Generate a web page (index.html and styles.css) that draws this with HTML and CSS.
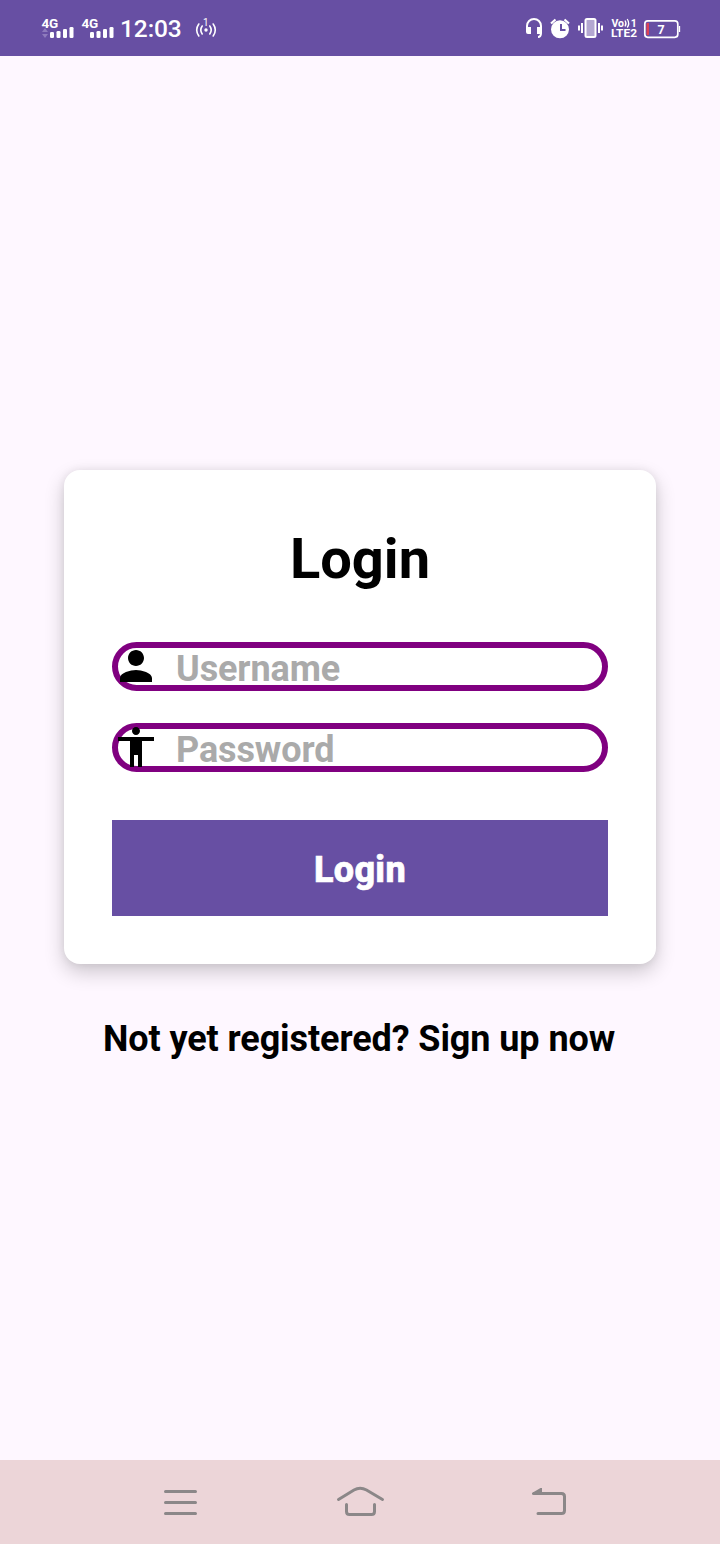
FILE: index.html
```html
<!DOCTYPE html>
<html lang="en">
<head>
<meta charset="utf-8">
<title>Login</title>
<link rel="stylesheet" href="styles.css">
</head>
<body>
<header class="status">
  <svg class="signal" width="80" height="56" viewBox="40 0 80 56" fill="#fff">
    <text class="net" x="41.500" y="28">4G</text>
    <text class="net" x="81.500" y="28">4G</text>
    <path fill="#8e7bbd" d="M42 32l3-4 3 4zM42 34h6l-3 4z"/>
    <g id="bars"><rect x="50" y="32" width="4" height="6" rx="1.3"/><rect x="56.500" y="31" width="4" height="7" rx="1.3"/><rect x="63" y="29" width="4" height="9" rx="1.3"/><rect x="69.500" y="27" width="4" height="11" rx="1.3"/></g>
    <use href="#bars" x="40"/>
  </svg>
  <span class="clock">12:03</span>
  <svg class="hotspot" width="24" height="56" viewBox="194 0 24 56" fill="none" stroke="#fff" stroke-width="1.600" stroke-linecap="round">
    <path d="M198.800 24Q194.600 30 198.800 36M202.200 26Q199.400 30 202.200 34M213.200 24Q217.400 30 213.200 36M209.800 26Q212.600 30 209.800 34"/>
    <circle cx="206" cy="30" r="1.700" fill="#fff" stroke="none"/>
    <text class="one" x="203" y="26">1</text>
  </svg>
  <svg class="indicators" width="160" height="56" viewBox="522 0 160 56" fill="none" stroke="#fff">
    <path stroke-width="2" d="M527 30v-4a7 7 0 0 1 14 0v7q0 4-3 4"/>
    <path fill="#fff" stroke="none" d="M526 27h5v7h-3q-2 0-2-2zM537 27h5v5q0 2-2 2h-3z"/>
    <circle cx="560" cy="29.300" r="9" fill="#fff" stroke="none"/>
    <path stroke-width="2.200" d="M551 23.500l4.500-4M569 23.500l-4.500-4"/>
    <path stroke="#674fa3" stroke-width="2" d="M561 24v6h4.500"/>
    <rect x="585.500" y="19" width="10" height="18" rx="1.500" fill="#b3a7d1" stroke-width="2"/>
    <path stroke-width="2" d="M582 23v10M599 23v10M579 25.500v5M602 25.500v5"/>
    <g fill="#fff" stroke="none">
      <text class="volte" x="611.500" y="27">Vo</text>
      <text class="volte" x="630.800" y="27">1</text>
      <text class="volte lte" x="611" y="37.300" textLength="26" lengthAdjust="spacingAndGlyphs">LTE2</text>
    </g>
    <path stroke-width="1.300" d="M625 20.500q2 3 0 6M627.200 19q3 4.500 0 8.500"/>
    <rect x="644.800" y="20.800" width="33" height="16.500" rx="3" stroke-width="1.700"/>
    <path fill="#dd4255" stroke="none" d="M647 23h2v12h-2q-.5 0-.5-1V24q0-1 .5-1z"/>
    <path stroke-width="1.300" d="M679.500 26v6"/>
    <text class="charge" x="657.500" y="34" fill="#fff" stroke="none">7</text>
  </svg>
</header>
<main class="screen">
  <section class="card">
    <h1 class="title">Login</h1>
    <div class="field">
      <svg class="icon" viewBox="0 0 24 24"><path d="M12 12c2.210 0 4-1.790 4-4s-1.790-4-4-4-4 1.790-4 4 1.790 4 4 4zm0 2c-2.670 0-8 1.340-8 4v2h16v-2c0-2.660-5.330-4-8-4z"/></svg>
      <span class="hint">Username</span>
    </div>
    <div class="field">
      <svg class="icon" viewBox="0 0 24 24"><path d="M12 2c1.100 0 2 .9 2 2s-.9 2-2 2-2-.9-2-2 .9-2 2-2zm9 7h-6v13h-2v-6h-2v6H9V9H3V7h18z"/></svg>
      <span class="hint">Password</span>
    </div>
    <button class="submit">Login</button>
  </section>
  <p class="signup">Not yet registered? Sign up now</p>
</main>
<nav class="nav">
  <svg width="40" height="84" viewBox="160 1460 40 84"><path d="M165.500 1491.500h30M165.500 1502.500h30M165.500 1513.500h30"/></svg>
  <svg width="50" height="84" viewBox="340 1460 50 84"><path d="M338.500 1499.500L354 1490q6-3.500 12.500 0l16 9.500M346.500 1504.500v7q0 3 3 3h22q3 0 3-3v-7"/></svg>
  <svg width="40" height="84" viewBox="530 1460 40 84"><path d="M538 1513.500h23.500q3 0 3-3v-14q0-3-3-3H534"/><path class="tip" d="M532 1494.500v-1.500l8.500-5H542v7z"/></svg>
</nav>
</body>
</html>
```
FILE: styles.css
```css
* { box-sizing: border-box; }
body {
  margin: 0;
  height: 1544px;
  display: flex;
  flex-direction: column;
  background: #fef7ff;
  font-family: Roboto, sans-serif;
  color: #000;
}
svg { display: block; flex: none; overflow: visible; }
.status {
  height: 56px;
  display: flex;
  align-items: center;
  padding-left: 40px;
  background: #674fa3;
  color: #fff;
}
.clock { width: 74px; font-size: 24.5px; line-height: 54px; font-weight: 500; padding-top: 2px; letter-spacing: -.1px; }
.indicators { margin-left: 304px; }
.net { font-size: 13.5px; font-weight: 700; letter-spacing: -.2px; }
.one { font-size: 10px; fill: #fff; stroke: none; }
.volte { font-size: 10.5px; font-weight: 700; }
.lte { font-size: 11.5px; }
.charge { font-size: 12.5px; font-weight: 700; }
.screen { flex: 1; padding: 414px 64px 0; }
.card {
  height: 494px;
  padding: 48px;
  border-radius: 16px;
  background: #fff;
  box-shadow: 0 8px 20px rgba(0, 0, 0, .2), 0 0 8px rgba(0, 0, 0, .07);
}
.title { margin: 0 0 42px; font-size: 56px; line-height: 82px; text-align: center; font-weight: 700; }
.field {
  height: 49px;
  display: flex;
  align-items: flex-start;
  border: 6px solid #800080;
  border-radius: 25px;
  margin-bottom: 32px;
}
.icon { width: 48px; height: 48px; margin: -6px 16px 0 -6px; }
.hint { font-size: 36px; line-height: 42px; font-weight: 700; color: #aaa; letter-spacing: -.1px; }
.submit {
  display: block;
  width: 100%;
  height: 96px;
  margin-top: 48px;
  padding: 4px 0 0;
  border: 0;
  background: #674fa3;
  color: #fff;
  font: 800 36px Roboto, sans-serif;
  letter-spacing: .3px;
  -webkit-text-stroke: .6px #fff;
}
.signup { margin: 54px -19px 0 -21px; font-size: 36px; line-height: 42px; font-weight: 700; text-align: center; letter-spacing: -.09px; }
.nav {
  height: 84px;
  display: flex;
  justify-content: space-between;
  padding: 0 150px 0 160px;
  background: #ecd5d8;
  fill: none;
  stroke: #8b8788;
  stroke-width: 3;
  stroke-linecap: round;
}
.tip { fill: #8b8788; stroke: none; }
```
